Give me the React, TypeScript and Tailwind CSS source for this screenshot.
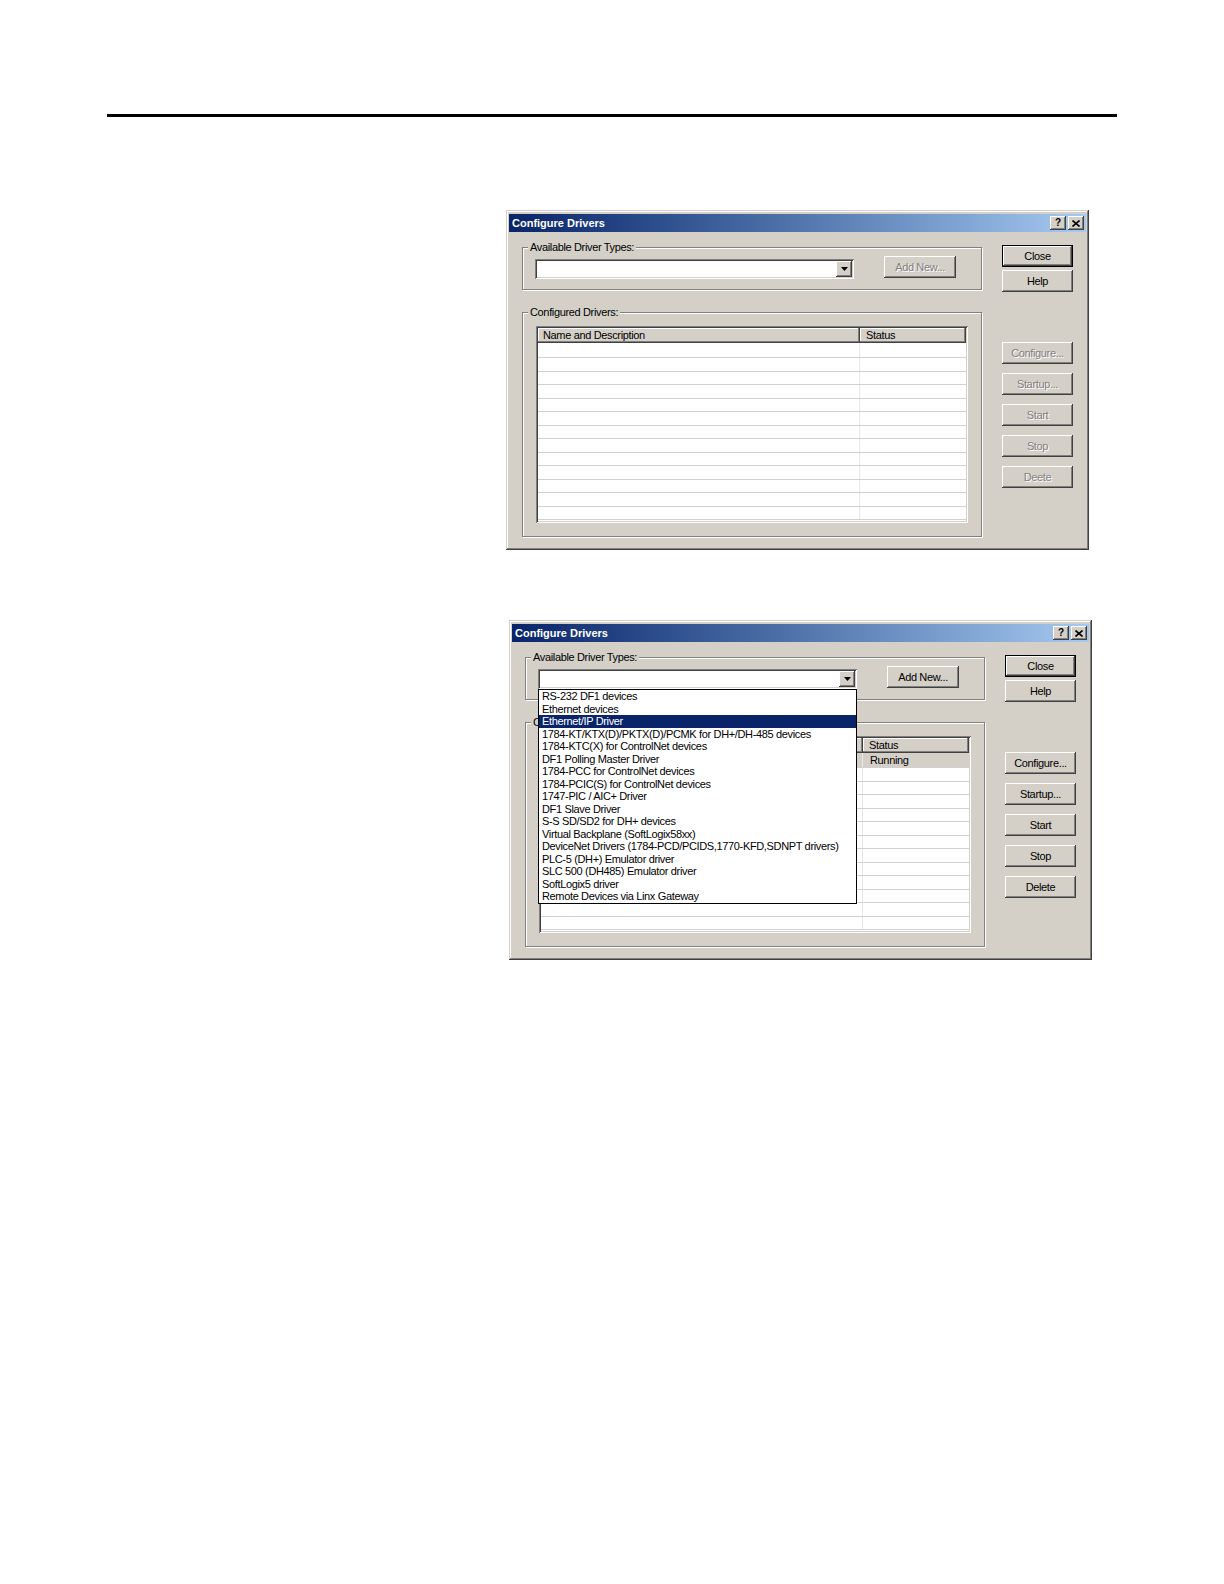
import React from "react";

const raised =
  "bg-[#d4d0c8] shadow-[inset_-1px_-1px_0_#404040,inset_1px_1px_0_#ffffff,inset_-2px_-2px_0_#808080]";
const sunken =
  "shadow-[inset_1px_1px_0_#808080,inset_-1px_-1px_0_#ffffff,inset_2px_2px_0_#404040,inset_-2px_-2px_0_#d4d0c8]";
const etched =
  "border border-[#808080] shadow-[inset_1px_1px_0_#ffffff,1px_1px_0_#ffffff]";
const disabledText = "text-[#808080] [text-shadow:1px_1px_0_#ffffff]";

const driverTypes = [
  "RS-232 DF1 devices",
  "Ethernet devices",
  "Ethernet/IP Driver",
  "1784-KT/KTX(D)/PKTX(D)/PCMK for DH+/DH-485 devices",
  "1784-KTC(X) for ControlNet devices",
  "DF1 Polling Master Driver",
  "1784-PCC for ControlNet devices",
  "1784-PCIC(S) for ControlNet devices",
  "1747-PIC / AIC+ Driver",
  "DF1 Slave Driver",
  "S-S SD/SD2 for DH+ devices",
  "Virtual Backplane (SoftLogix58xx)",
  "DeviceNet Drivers (1784-PCD/PCIDS,1770-KFD,SDNPT drivers)",
  "PLC-5 (DH+) Emulator driver",
  "SLC 500 (DH485) Emulator driver",
  "SoftLogix5 driver",
  "Remote Devices via Linx Gateway",
];

function Button({
  label,
  disabled,
  isDefault,
  className = "",
}: {
  label: string;
  disabled?: boolean;
  isDefault?: boolean;
  className?: string;
}) {
  return (
    <div
      className={`h-[22px] w-[71px] ${isDefault ? "border border-black" : ""} ${className}`}
    >
      <div
        className={`${raised} flex h-full w-full items-center justify-center ${
          disabled ? disabledText : "text-black"
        }`}
      >
        {label}
      </div>
    </div>
  );
}

function TitleBar() {
  return (
    <div className="flex h-[18px] items-center bg-linear-to-r from-[#0a246a] to-[#a6caf0] pl-[3px] pr-[2px]">
      <span className="flex-1 text-[11px] font-bold leading-[18px] tracking-normal text-white">
        Configure Drivers
      </span>
      <div
        className={`${raised} flex h-[14px] w-[16px] items-center justify-center text-[10px] font-bold leading-none text-black`}
      >
        ?
      </div>
      <div
        className={`${raised} ml-[2px] flex h-[14px] w-[16px] items-center justify-center`}
      >
        <svg width="8" height="7" viewBox="0 0 8 7">
          <path d="M0.5 0.5L7.5 6.5M7.5 0.5L0.5 6.5" stroke="#000" strokeWidth="1.6" />
        </svg>
      </div>
    </div>
  );
}

function Combo({ open }: { open?: boolean }) {
  return (
    <div className="relative">
      <div className={`${sunken} flex h-[20px] w-[319px] justify-end bg-white p-[2px]`}>
        <div className={`${raised} flex h-[16px] w-[16px] items-center justify-center`}>
          <svg width="7" height="4" viewBox="0 0 7 4">
            <polygon points="0,0 7,0 3.5,4" fill="#000" />
          </svg>
        </div>
      </div>
      {open && (
        <div className="absolute left-0 top-full z-10 w-[319px] border border-black bg-white">
          {driverTypes.map((t, i) => (
            <div
              key={t}
              className={`h-[12.5px] whitespace-nowrap pl-[3px] leading-[12.5px] ${
                i === 2 ? "bg-[#0a246a] text-white" : "text-black"
              }`}
            >
              {t}
            </div>
          ))}
        </div>
      )}
    </div>
  );
}

function DriverList({ running }: { running?: boolean }) {
  const rows = Array.from({ length: 12 });
  return (
    <div className={`${sunken} h-[197px] w-[432px] bg-white p-[2px]`}>
      <div className="h-full overflow-hidden">
        <div className="flex h-[15px] leading-[14px]">
          <div className="w-[322px] border-b border-r border-[#404040] bg-[#d4d0c8] pl-[5px] shadow-[inset_-1px_-1px_0_#808080,inset_1px_1px_0_#ffffff]">
            {running ? "" : "Name and Description"}
          </div>
          <div className="flex-1 border-b border-r border-[#404040] bg-[#d4d0c8] pl-[6px] shadow-[inset_-1px_-1px_0_#808080,inset_1px_1px_0_#ffffff]">
            Status
          </div>
        </div>
        <div
          className={`flex h-[15px] border-b border-[#d0d0d0] leading-[14px] ${
            running ? "bg-[#d4d0c8]" : ""
          }`}
        >
          <div className="w-[322px] border-r border-[#e8e8e8]" />
          <div className="flex-1 pl-[7px]">{running ? "Running" : ""}</div>
        </div>
        {rows.map((_, i) => (
          <div key={i} className="flex h-[13.5px] border-b border-[#d0d0d0]">
            <div className="w-[322px] border-r border-[#e8e8e8]" />
            <div className="flex-1" />
          </div>
        ))}
      </div>
    </div>
  );
}

function Dialog({ open, className = "" }: { open?: boolean; className?: string }) {
  const off = !open;
  return (
    <div
      className={`h-[340px] w-[583px] bg-[#d4d0c8] px-[3px] pt-[4px] shadow-[inset_-1px_-1px_0_#404040,inset_1px_1px_0_#d4d0c8,inset_-2px_-2px_0_#808080,inset_2px_2px_0_#ffffff] ${className}`}
    >
      <TitleBar />
      <div className="flex pl-[13px]">
        <div className="w-[460px]">
          <div className={`${etched} relative mt-[15px] h-[43px]`}>
            <span className="absolute -top-[7px] left-[5px] bg-[#d4d0c8] px-[2px] leading-[13px]">
              Available Driver Types:
            </span>
            <div className="flex items-start pl-[12px] pt-[11px]">
              <Combo open={open} />
              <Button label="Add New..." disabled={off} className="-mt-[3px] ml-[30px] w-[72px]" />
            </div>
          </div>
          <div className={`${etched} relative mt-[22px] h-[225px]`}>
            <span className="absolute -top-[7px] left-[5px] bg-[#d4d0c8] px-[2px] leading-[13px]">
              {open ? "C" : "Configured Drivers:"}
            </span>
            <div className="pl-[13px] pt-[13px]">
              <DriverList running={open} />
            </div>
          </div>
        </div>
        <div className="ml-[20px] flex flex-col pt-[13px]">
          <Button label="Close" isDefault />
          <Button label="Help" className="mt-[3px]" />
          <Button label="Configure..." disabled={off} className="mt-[50px]" />
          <Button label="Startup..." disabled={off} className="mt-[9px]" />
          <Button label="Start" disabled={off} className="mt-[9px]" />
          <Button label="Stop" disabled={off} className="mt-[9px]" />
          <Button label={off ? "Deete" : "Delete"} disabled={off} className="mt-[9px]" />
        </div>
      </div>
    </div>
  );
}

export default function App() {
  return (
    <div className="h-[1584px] w-[1224px] overflow-hidden bg-white font-['Liberation_Sans',Arial,sans-serif] text-[11px] tracking-[-0.35px] text-black">
      <div className="pl-[107px] pt-[114px]">
        <div className="h-[3px] w-[1010px] bg-black" />
      </div>
      <Dialog className="ml-[506px] mt-[93px]" />
      <Dialog open className="ml-[509px] mt-[70px]" />
    </div>
  );
}
